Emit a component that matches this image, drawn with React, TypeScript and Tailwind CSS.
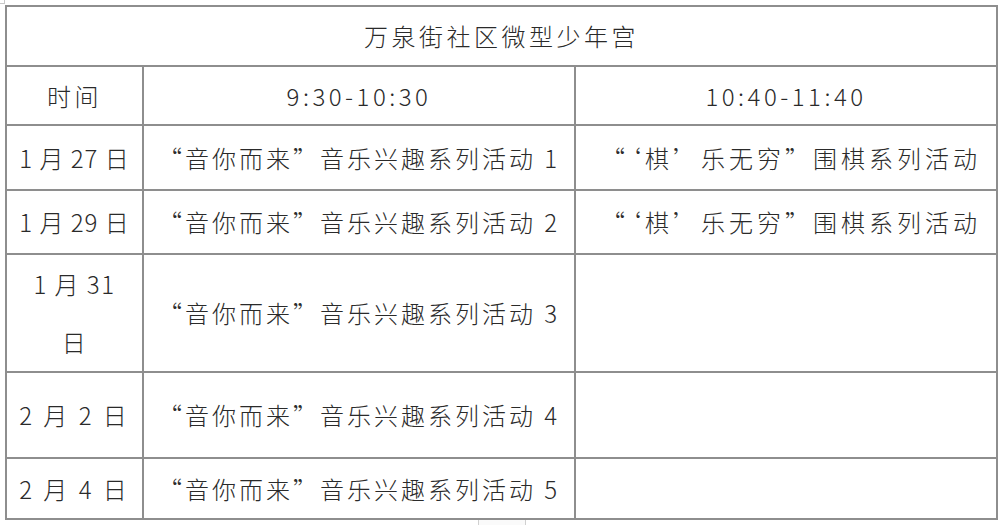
const rows = [
  { date: "1 月 27 日", am: "“音你而来”音乐兴趣系列活动 1", pm: "“‘棋’乐无穷”围棋系列活动", h: "h-[63px]", t: "tracking-[1px]" },
  { date: "1 月 29 日", am: "“音你而来”音乐兴趣系列活动 2", pm: "“‘棋’乐无穷”围棋系列活动", h: "h-[62px]", t: "tracking-[1px]" },
  { date: "1 月 31|日", am: "“音你而来”音乐兴趣系列活动 3", pm: "", h: "h-[116px]", t: "tracking-[1.5px]" },
  { date: "2 月 2 日", am: "“音你而来”音乐兴趣系列活动 4", pm: "", h: "h-[84px]", t: "tracking-[3px]" },
  { date: "2 月 4 日", am: "“音你而来”音乐兴趣系列活动 5", pm: "", h: "h-[59px]", t: "tracking-[3px]" },
]

function Cell({ children, className = "" }: { children?: React.ReactNode; className?: string }) {
  return (
    <div className={`flex items-center justify-center bg-white text-center ${className}`}>
      {children}
    </div>
  )
}

export default function App() {
  return (
    <div
      className="relative h-[525px] w-[1000px] overflow-hidden bg-white text-[24px] tracking-[3.5px] text-[#2a2a2a]"
      style={{ fontFamily: '"Noto Sans CJK SC", "Noto Sans", sans-serif' }}
    >
      {/* corner crop mark */}
      <div className="absolute left-0 top-0 h-[4px] w-[5px] border-b border-r border-[#c8c8c8]" />

      <div className="ml-[5px] mt-[5px] grid w-[993px] grid-cols-[135px_430px_420px] gap-[2px] bg-[#8e8e8e] p-[2px] font-light">
        <Cell className="col-span-3 h-[58px]">万泉街社区微型少年宫</Cell>

        <Cell className="h-[57px]">时间</Cell>
        <Cell>9:30-10:30</Cell>
        <Cell>10:40-11:40</Cell>

        {rows.map((r) => (
          <div key={r.am} className="contents">
            <Cell className={`${r.h} ${r.t}`}>
              {r.date.includes("|") ? (
                <span className="leading-[58px]">
                  {r.date.split("|")[0]}
                  <br />
                  {r.date.split("|")[1]}
                </span>
              ) : (
                r.date
              )}
            </Cell>
            <Cell className="tracking-[3px]">{r.am}</Cell>
            <Cell className="pl-[10px] tracking-[4px]">{r.pm}</Cell>
          </div>
        ))}
      </div>

      {/* little tab below the table */}
      <div className="ml-[478px] h-[6px] w-[48px] border-x border-[#d0d0d0] bg-[#fafafa]" />
    </div>
  )
}
